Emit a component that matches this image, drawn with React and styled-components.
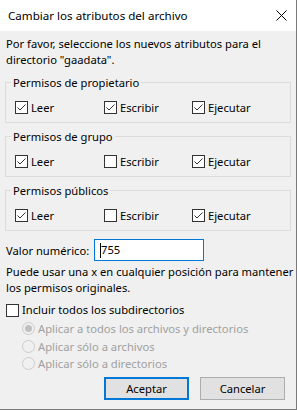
import React from 'react';
import styled, { createGlobalStyle } from 'styled-components';

const GlobalStyle = createGlobalStyle`
  html, body {
    margin: 0;
    padding: 0;
    background: #ffffff;
  }
  body {
    font-family: "Noto Sans", "Liberation Sans", sans-serif;
    font-size: 11.2px;
    color: #000;
  }
`;

const Window = styled.div`
  width: 296px;
  height: 409px;
  border-right: 1px solid #7a7a7a;
  border-bottom: 1px solid #7a7a7a;
  background: #f0f0f0;
  display: flex;
  flex-direction: column;
`;

const TitleBar = styled.div`
  height: 31px;
  background: #ffffff;
  display: flex;
  align-items: center;
  justify-content: space-between;
  padding: 0 8px;
  flex-shrink: 0;
`;

const Title = styled.div`
  font-size: 11.6px;
  line-height: 16px;
`;

const CloseIcon = styled.svg`
  width: 11px;
  height: 11px;
  margin-right: 1px;
`;

const Body = styled.div`
  padding: 5px 0 0 5px;
  display: flex;
  flex-direction: column;
`;

const Paragraph = styled.div`
  line-height: 16px;
  padding-left: 1px;
  margin-top: ${(p) => p.$top || 0}px;
  white-space: nowrap;
`;

const GroupBox = styled.fieldset`
  margin: ${(p) => p.$top || 0}px 0 0 0;
  padding: 0 0 6px 9px;
  width: 286px;
  box-sizing: border-box;
  border: 1px solid #dcdcdc;
  min-inline-size: 0;
`;

const GroupTitle = styled.legend`
  margin-left: -4px;
  padding: 0 2px;
  line-height: 15px;
`;

const CheckRow = styled.div`
  margin-top: 9px;
  height: 17px;
  display: grid;
  grid-template-columns: 89px 88px auto;
  align-items: center;
`;

const CheckLabel = styled.label`
  display: flex;
  align-items: center;
  gap: 3px;
  line-height: 16px;
  white-space: nowrap;
  margin-top: ${(p) => p.$top || 0}px;
  margin-left: ${(p) => p.$left || 0}px;
`;

const Box = styled.span`
  width: 13px;
  height: 13px;
  box-sizing: border-box;
  border: 1px solid #333333;
  background: #ffffff;
  display: flex;
  align-items: center;
  justify-content: center;
  flex-shrink: 0;
`;

const ValueRow = styled.div`
  margin-top: 8px;
  display: flex;
  align-items: center;
`;

const ValueLabel = styled.span`
  width: 88px;
  padding-left: 1px;
  white-space: nowrap;
`;

const ValueInput = styled.div`
  width: 110px;
  height: 22px;
  box-sizing: border-box;
  border: 1px solid #0078d7;
  background: #ffffff;
  display: flex;
  align-items: center;
  padding-left: 5px;
  line-height: 16px;
`;

const Caret = styled.span`
  width: 1px;
  height: 15px;
  background: #000;
`;

const RadioList = styled.div`
  margin-top: 4px;
  margin-left: 17px;
  display: flex;
  flex-direction: column;
  gap: 4.5px;
`;

const RadioLabel = styled.label`
  display: flex;
  align-items: center;
  gap: 3px;
  height: 13px;
  color: #a0a0a0;
  white-space: nowrap;
`;

const RadioDot = styled.span`
  width: 13px;
  height: 13px;
  box-sizing: border-box;
  border-radius: 50%;
  border: 1px solid #cccccc;
  background: #f0f0f0;
  display: flex;
  align-items: center;
  justify-content: center;
  &::after {
    content: '';
    width: 7px;
    height: 7px;
    border-radius: 50%;
    background: ${(p) => (p.$on ? '#c0c0c0' : 'transparent')};
  }
`;

const ButtonBar = styled.div`
  margin-top: 7px;
  display: flex;
  justify-content: flex-end;
  gap: 11px;
  padding-right: 11px;
`;

const Button = styled.div`
  width: 85px;
  height: 23px;
  box-sizing: border-box;
  border: ${(p) => (p.$default ? '2px solid #0078d7' : '1px solid #adadad')};
  background: #e1e1e1;
  display: flex;
  align-items: center;
  justify-content: center;
  line-height: 16px;
`;

const Tick = () => (
  <svg width="11" height="11" viewBox="0 0 11 11">
    <polyline points="1.5,5.5 4,8 9.5,2.5" fill="none" stroke="#333" strokeWidth="1" />
  </svg>
);

const CheckBox = ({ checked, children, top, left }) => (
  <CheckLabel $top={top} $left={left}>
    <Box>{checked && <Tick />}</Box>
    {children}
  </CheckLabel>
);

const Group = ({ title, values, top }) => (
  <GroupBox $top={top}>
    <GroupTitle>{title}</GroupTitle>
    <CheckRow>
      <CheckBox checked={values[0]}>Leer</CheckBox>
      <CheckBox checked={values[1]}>Escribir</CheckBox>
      <CheckBox checked={values[2]}>Ejecutar</CheckBox>
    </CheckRow>
  </GroupBox>
);

const Radio = ({ on, children }) => (
  <RadioLabel>
    <RadioDot $on={on} />
    {children}
  </RadioLabel>
);

const App = () => (
  <>
    <GlobalStyle />
    <Window>
      <TitleBar>
        <Title>Cambiar los atributos del archivo</Title>
        <CloseIcon viewBox="0 0 11 11">
          <path d="M0.5 0.5 L10.5 10.5 M10.5 0.5 L0.5 10.5" stroke="#000" strokeWidth="1" />
        </CloseIcon>
      </TitleBar>
      <Body>
        <Paragraph>
          Por favor, seleccione los nuevos atributos para el
          <br />
          directorio "gaadata".
        </Paragraph>
        <Group title="Permisos de propietario" values={[true, true, true]} top={7} />
        <Group title="Permisos de grupo" values={[true, false, true]} top={6} />
        <Group title="Permisos públicos" values={[true, false, true]} top={6} />
        <ValueRow>
          <ValueLabel>Valor numérico:</ValueLabel>
          <ValueInput>
            <Caret />
            755
          </ValueInput>
        </ValueRow>
        <Paragraph $top={3}>
          Puede usar una x en cualquier posición para mantener
          <br />
          los permisos originales.
        </Paragraph>
        <CheckBox top={6} left={1}>Incluir todos los subdirectorios</CheckBox>
        <RadioList>
          <Radio on>Aplicar a todos los archivos y directorios</Radio>
          <Radio>Aplicar sólo a archivos</Radio>
          <Radio>Aplicar sólo a directorios</Radio>
        </RadioList>
        <ButtonBar>
          <Button $default>Aceptar</Button>
          <Button>Cancelar</Button>
        </ButtonBar>
      </Body>
    </Window>
  </>
);

export default App;
